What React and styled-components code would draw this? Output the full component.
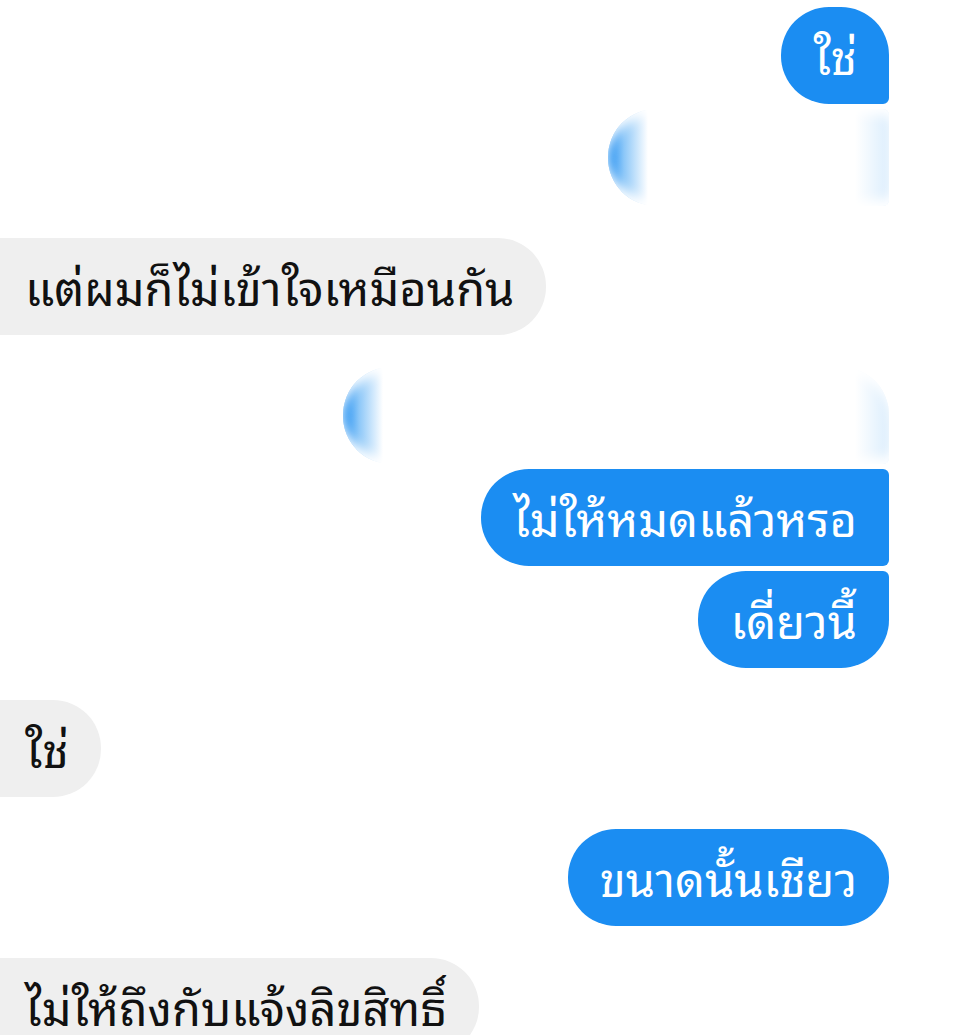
import React from 'react';
import styled, {createGlobalStyle, css} from "styled-components";

const GlobalStyle = createGlobalStyle`
  html, body {
    margin: 0;
    padding: 0;
    background: #ffffff;
  }
  body {
    font-family: "Noto Sans Thai Looped", "Noto Serif Thai", "Noto Sans Thai", "Noto Sans", sans-serif;
  }
`

const BLUE = '#1b8df2';
const GRAY = '#efefef';

const messages = [
    {from: 'me', text: 'ใช่', shape: 'first'},
    {from: 'me', text: '', shape: 'middle', hidden: true, width: 281},
    {from: 'them', text: 'แต่ผมก็ไม่เข้าใจเหมือนกัน', gap: 'far'},
    {from: 'me', text: '', shape: 'first', hidden: true, width: 546, gap: 'far'},
    {from: 'me', text: 'ไม่ให้หมดแล้วหรอ', shape: 'middle'},
    {from: 'me', text: 'เดี่ยวนี้', shape: 'last'},
    {from: 'them', text: 'ใช่', gap: 'far'},
    {from: 'me', text: 'ขนาดนั้นเชียว', gap: 'far'},
    {from: 'them', text: 'ไม่ให้ถึงกับแจ้งลิขสิทธิ์', gap: 'far'},
];

function App() {
    return (
        <>
            <GlobalStyle/>
            <Thread>
                {messages.map((m, i) => (
                    <Bubble key={i} $from={m.from} $shape={m.shape} $hidden={m.hidden} $far={m.gap === 'far'}
                            style={m.width ? {width: m.width} : undefined}>
                        {m.text}
                    </Bubble>
                ))}
            </Thread>
        </>
    );
}

const Thread = styled.div`
  display: flex;
  flex-direction: column;
  padding: 7px 71px 0 0;
  height: 1035px;
  box-sizing: border-box;
  overflow: hidden;
`

const shapes = {
    first: css`border-radius: 48px 48px 6px 48px;`,
    middle: css`border-radius: 48px 6px 6px 48px;`,
    last: css`border-radius: 48px 6px 48px 48px;`,
};

const Bubble = styled.div`
  box-sizing: border-box;
  height: 97px;
  flex: none;
  display: flex;
  align-items: center;
  padding: 0 32px 4px;
  font-size: 47px;
  line-height: 1;
  white-space: nowrap;
  margin-top: ${p => p.$far ? '32px' : '5px'};
  &:first-child { margin-top: 0; }

  ${p => p.$from === 'me' ? css`
    align-self: flex-end;
    background: ${BLUE};
    color: #ffffff;
    border-radius: 48px;
  ` : css`
    align-self: flex-start;
    background: ${GRAY};
    color: #111111;
    border-radius: 0 48px 48px 0;
    padding-left: 25px;
  `}

  ${p => p.$shape && shapes[p.$shape]}

  ${p => p.$hidden && css`
    background: linear-gradient(90deg, ${BLUE} 0px, #8cc7f8 16px, #ffffff 40px, #ffffff calc(100% - 34px), #dceefd 100%);
    box-shadow: inset 0 10px 12px -4px #ffffff, inset 0 -10px 12px -4px #ffffff;
  `}
`;

export default App;
